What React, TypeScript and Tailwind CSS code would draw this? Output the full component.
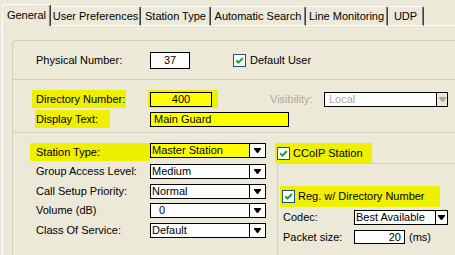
import type { ReactNode } from "react";

const HL = "bg-[#EFEF00]";

const tabs = [
  { label: "User Preferences", w: "w-[90px]" },
  { label: "Station Type", w: "w-[70px]" },
  { label: "Automatic Search", w: "w-[95px]" },
  { label: "Line Monitoring", w: "w-[82px]" },
  { label: "UDP", w: "w-[36px]" },
];

export default function App() {
  return (
    <div className="h-[255px] w-[455px] overflow-hidden bg-[#ECE9D8] font-['Liberation_Sans',Arial,sans-serif] text-[11px] leading-none text-black">
      <TabStrip />

      {/* Tab page */}
      <div className="ml-[2px] h-[229px] border-l border-white pl-[9px] pt-[14px]">
        {/* Physical number */}
        <div className="h-[39px] rounded-tl-[4px] border-l border-t border-[#D0D0BF]">
          <div className="flex items-center pl-[23px] pt-[11px]">
            <span className="w-[114px] whitespace-nowrap">Physical Number:</span>
            <span className="flex h-[17px] w-[40px] items-center justify-center border border-black bg-white">
              37
            </span>
            <Checkbox className="ml-[43px]" />
            <span className="ml-[4px] whitespace-nowrap">Default User</span>
          </div>
        </div>

        {/* Directory */}
        <div className="h-[53px] border-l border-t border-[#D0D0BF]">
          <div className="mt-[10px] flex h-[18px] items-center">
            <span className={`ml-[19px] flex h-full w-[94px] items-center whitespace-nowrap pl-[4px] ${HL}`}>
              Directory Number:
            </span>
            <span className={`ml-[22px] flex h-full w-[70px] items-center pl-[2px] ${HL}`}>
              <span className="flex h-[15px] w-[62px] items-center justify-center border border-black bg-[#FFFF00]">
                400
              </span>
            </span>
            <span className="ml-[52px] w-[54px] text-[#ACA899]">Visibility:</span>
            <Combo value="Local" className="w-[124px]" btn="w-[11px]" pad="pl-[4px]" disabled />
          </div>
          <div className="mt-[2px] flex h-[18px] items-center">
            <span className={`ml-[22px] flex h-full w-[75px] items-center whitespace-nowrap pl-[1px] ${HL}`}>
              Display Text:
            </span>
            <span className="ml-[40px] flex h-[15px] w-[139px] items-center border border-black bg-[#FFFF00] pl-[3px]">
              Main Guard
            </span>
          </div>
        </div>

        {/* Station */}
        <div className="flex h-[123px] items-start border-l border-t border-[#D0D0BF]">
          <div className="ml-[17px] mt-[10px] flex flex-col">
            <div className="flex h-[18px]">
              <span className={`flex w-[120px] items-center whitespace-nowrap pl-[6px] ${HL}`}>
                Station Type:
              </span>
              <Combo value="Master Station" className="w-[116px]" fill="bg-[#FFFF00]" />
            </div>
            <Row className="mt-[3px]" label="Group Access Level:">
              <Combo value="Medium" className="w-[116px]" />
            </Row>
            <Row className="mt-[5px]" label="Call Setup Priority:">
              <Combo value="Normal" className="w-[116px]" />
            </Row>
            <Row className="mt-[4px]" label="Volume (dB)">
              <Combo value="0" className="w-[116px]" pad="pl-[8px]" />
            </Row>
            <Row className="mt-[5px]" label="Class Of Service:">
              <Combo value="Default" className="w-[116px]" />
            </Row>
          </div>

          <div className="ml-[9px] mt-[10px] flex flex-1 flex-col">
            <div className={`flex h-[20px] w-[97px] items-center pl-[2px] ${HL}`}>
              <Checkbox />
              <span className="ml-[3px] whitespace-nowrap">CCoIP Station</span>
            </div>
            <div className="ml-[2px] h-[100px] rounded-tl-[4px] border-l border-t border-[#D0D0BF]">
              <div className={`ml-[2px] mt-[22px] flex h-[21px] w-[160px] items-center pl-[2px] ${HL}`}>
                <Checkbox />
                <span className="ml-[3px] whitespace-nowrap">Reg. w/ Directory Number</span>
              </div>
              <div className="mt-[3px] flex h-[15px] items-center">
                <span className="ml-[5px] w-[71px]">Codec:</span>
                <Combo value="Best Available" className="w-[94px]" btn="w-[12px]" />
              </div>
              <div className="mt-[5px] flex h-[14px] items-center">
                <span className="ml-[5px] w-[71px] whitespace-nowrap">Packet size:</span>
                <span className="flex h-full w-[51px] items-center justify-end border border-black bg-white pr-[3px]">
                  20
                </span>
                <span className="ml-[4px]">(ms)</span>
              </div>
            </div>
          </div>
        </div>
      </div>
    </div>
  );
}

function TabStrip() {
  return (
    <div className="flex h-[26px] items-end">
      <div className="h-px w-[2px] bg-white" />
      <div className="flex h-[22px] w-[49px] items-center justify-center rounded-tl-[3px] rounded-tr-[2px] border-l border-r border-t border-white border-r-[#404040] pb-[1px] shadow-[inset_-1px_0_0_#808080]">
        General
      </div>
      {tabs.map((t) => (
        <div
          key={t.label}
          className={`flex h-[20px] ${t.w} items-center justify-center whitespace-nowrap rounded-tr-[2px] border-b border-r border-t border-b-white border-r-[#404040] border-t-white shadow-[inset_-1px_0_0_#808080]`}
        >
          {t.label}
        </div>
      ))}
      <div className="h-px flex-1 bg-white" />
    </div>
  );
}

function Row({ label, className = "", children }: { label: string; className?: string; children: ReactNode }) {
  return (
    <div className={`flex h-[15px] items-center ${className}`}>
      <span className="w-[120px] whitespace-nowrap pl-[6px]">{label}</span>
      {children}
    </div>
  );
}

function Combo({
  value,
  className = "",
  fill = "bg-white",
  btn = "w-[16px]",
  pad = "pl-[1px]",
  disabled = false,
}: {
  value: string;
  className?: string;
  fill?: string;
  btn?: string;
  pad?: string;
  disabled?: boolean;
}) {
  return (
    <div className={`flex h-[15px] border border-black ${className}`}>
      <div className={`flex flex-1 items-center whitespace-nowrap ${pad} ${fill} ${disabled ? "text-[#ACA899]" : ""}`}>
        {value}
      </div>
      <div className={`flex ${btn} items-center justify-center border-l border-black ${disabled ? "bg-[#ECE9D8]" : "bg-white"}`}>
        <svg viewBox="0 0 7 5" className="h-[5px] w-[7px]">
          <polygon points="0,0 7,0 7,1 4,5 3,5 0,1" fill={disabled ? "#ACA899" : "#000"} />
        </svg>
      </div>
    </div>
  );
}

function Checkbox({ className = "" }: { className?: string }) {
  return (
    <span className={`flex h-[13px] w-[13px] shrink-0 items-center justify-center border border-[#1C5180] bg-white ${className}`}>
      <svg viewBox="0 0 11 11" className="h-[11px] w-[11px]">
        <path d="M2.2 5.2 L4.5 7.6 L8.8 3" fill="none" stroke="#21A121" strokeWidth="2" />
      </svg>
    </span>
  );
}
